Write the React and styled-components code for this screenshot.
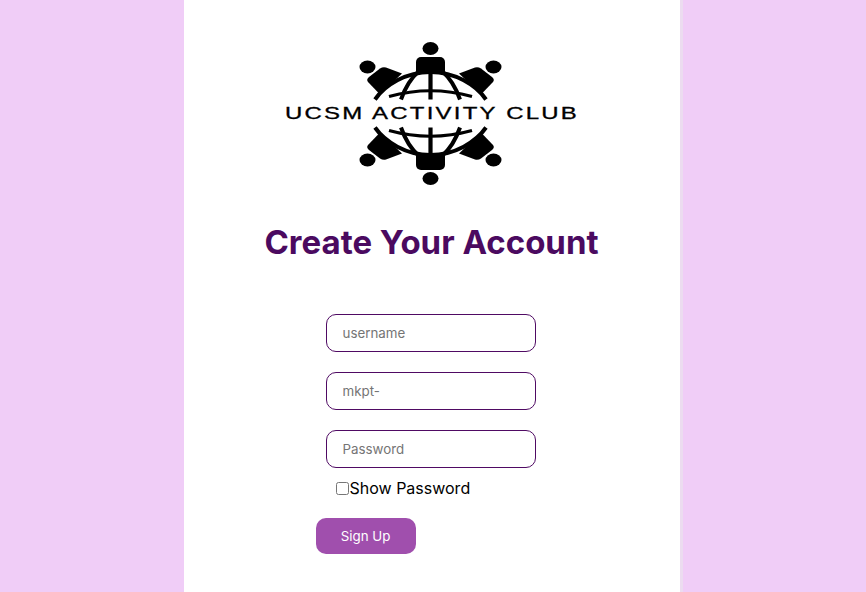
import React from 'react';
import styled, { createGlobalStyle } from 'styled-components';

const GlobalStyle = createGlobalStyle`
  html, body {
    margin: 0;
    height: 100%;
    overflow: hidden;
    background: #f0cdf7;
    font-family: Inter, "Liberation Sans", sans-serif;
  }
`;

const Page = styled.main`
  height: 592px;
  padding-left: 184px;
`;

const Panel = styled.section`
  box-sizing: border-box;
  width: 499px;
  height: 592px;
  padding-top: 30px;
  background: #fff;
  border-right: 3px solid #ecdcf0;
  display: flex;
  flex-direction: column;
  align-items: center;
`;

const LogoSvg = styled.svg`
  display: block;
  width: 320px;
  height: 165px;
  margin-left: -5px;
`;

const Title = styled.h1`
  margin: 25px 0 0 -1px;
  font-size: 33px;
  line-height: 44px;
  font-weight: 700;
  color: #4b0a60;
`;

const Form = styled.form`
  width: 230px;
  margin: 50px 0 0 -3px;
  display: flex;
  flex-direction: column;
  align-items: flex-start;
`;

const Input = styled.input`
  box-sizing: border-box;
  width: 210px;
  height: 38px;
  margin: 0 0 20px 10px;
  padding: 0 16px;
  border: 1px solid #4f0a63;
  border-radius: 10px;
  background: #fff;
  font-family: inherit;
  font-size: 13.33px;
  outline: none;

  &::placeholder {
    color: #757575;
  }
`;

const CheckRow = styled.label`
  display: flex;
  align-items: center;
  margin: -10px 0 0 20px;
  height: 20px;
  font-size: 16px;
  color: #000;
`;

const Check = styled.input`
  width: 13px;
  height: 13px;
  margin: 0 1px 0 0;
`;

const SubmitButton = styled.button`
  width: 100px;
  height: 36px;
  margin-top: 20px;
  border: none;
  border-radius: 10px;
  background: #a04fad;
  color: #fff;
  font-family: inherit;
  font-size: 13.33px;
`;

// top half of the badge, the lower half is the same drawing flipped
const BadgeHalf = () => (
  <g>
    <ellipse cx="430.5" cy="48.5" rx="8" ry="6.5" />
    <ellipse cx="367.5" cy="67" rx="8" ry="6.5" />
    <ellipse cx="493.5" cy="67" rx="8" ry="6.5" />
    <path d="M421 57h19a5 5 0 0 1 5 5v11h-29v-11a5 5 0 0 1 5-5z" />
    <path d="M380 68.500q3-2 6-1l16 6-22 21-12-12.500q-2-2.500 1-5z" />
    <path d="M481 68.500q-3-2-6-1l-16 6 22 21 12-12.500q2-2.500-1-5z" />
    <g fill="none" stroke="#000" strokeWidth="4">
      <path d="M375 99.500C385 85 406 72 430.500 72S476 85 486 99.500" />
      <path d="M401 99.500C405 88 411 78 419 71" />
      <path d="M460 99.500C456 88 450 78 442 71" />
      <path d="M389 96.500Q430.500 85 472 96.500" strokeWidth="3.200" />
      <path d="M430.500 70V99.500" strokeWidth="4.200" />
    </g>
  </g>
);

const Logo = () => (
  <LogoSvg viewBox="270 30 320 165" role="img" aria-label="UCSM Activity Club logo">
    <BadgeHalf />
    <g transform="matrix(1 0 0 -1 0 227)">
      <BadgeHalf />
    </g>
    <text
      x="285"
      y="118.500"
      textLength="294"
      lengthAdjust="spacingAndGlyphs"
      fontFamily="'Liberation Sans', sans-serif"
      fontSize="16"
      letterSpacing="1.500"
      stroke="#000"
      strokeWidth="0.300"
    >
      UCSM ACTIVITY CLUB
    </text>
  </LogoSvg>
);

export default function App() {
  return (
    <>
      <GlobalStyle />
      <Page>
        <Panel>
          <Logo />
          <Title>Create Your Account</Title>
          <Form onSubmit={e => e.preventDefault()}>
            <Input type="text" placeholder="username" />
            <Input type="text" placeholder="mkpt-" />
            <Input type="password" placeholder="Password" />
            <CheckRow>
              <Check type="checkbox" />
              Show Password
            </CheckRow>
            <SubmitButton type="submit">Sign Up</SubmitButton>
          </Form>
        </Panel>
      </Page>
    </>
  );
}
